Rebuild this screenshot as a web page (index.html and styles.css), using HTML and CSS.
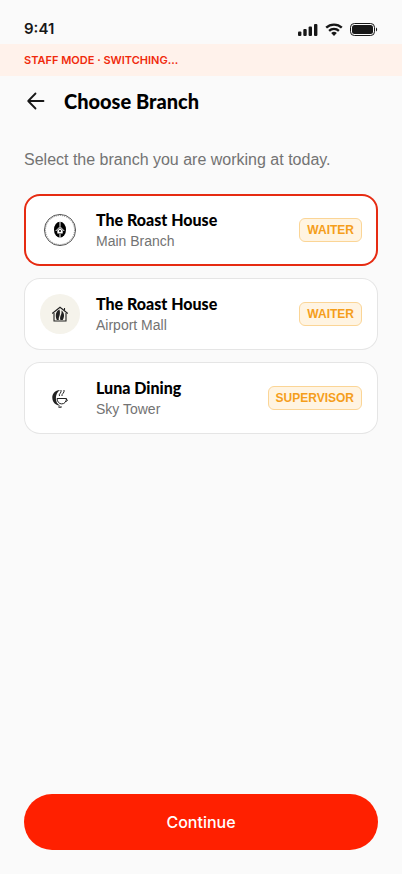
FILE: index.html
```
<!DOCTYPE html>
<html lang="en">
<head>
    <meta charset="UTF-8">
    <meta name="viewport" content="width=device-width, initial-scale=1.0">
    <title>Choose Branch</title>
    <link rel="stylesheet" href="styles.css">
</head>
<body>
    <div class="screen">
        <div class="status-bar">
            <span class="time">9:41</span>
            <div class="status-icons">
                <svg width="20" height="13" viewBox="0 0 20 13" fill="#171717" aria-hidden="true">
                    <rect x="0" y="8.5" width="3.4" height="4.5" rx="1"/>
                    <rect x="5.3" y="6" width="3.4" height="7" rx="1"/>
                    <rect x="10.6" y="3.5" width="3.4" height="9.5" rx="1"/>
                    <rect x="16" y="1" width="3.4" height="12" rx="1"/>
                </svg>
                <svg width="18" height="13" viewBox="0 0 18 13" aria-hidden="true">
                    <g fill="none" stroke="#171717" stroke-width="2.3">
                        <path d="M1.2 4.7a11.2 11.2 0 0 1 15.6 0"/>
                        <path d="M4.1 7.9a7 7 0 0 1 9.8 0"/>
                    </g>
                    <path d="M9 13 6.2 10.1a4 4 0 0 1 5.6 0z" fill="#171717"/>
                </svg>
                <svg width="28" height="13" viewBox="0 0 28 13" aria-hidden="true">
                    <rect x=".5" y=".5" width="24" height="12" rx="3.8" fill="none" stroke="#171717"/>
                    <rect x="2" y="2" width="21" height="9" rx="2.5" fill="#171717"/>
                    <path d="M26 4.5v4c1.5-.6 1.5-3.4 0-4z" fill="#171717"/>
                </svg>
            </div>
        </div>

        <div class="mode-banner">STAFF MODE · SWITCHING...</div>

        <header class="header">
            <button type="button" class="back-button" aria-label="Back">
                <svg width="24" height="24" viewBox="0 0 24 24" fill="none" stroke="#171717" stroke-width="1.8" stroke-linecap="round" stroke-linejoin="round">
                    <path d="M19.5 12H4.5M11.5 4.5 4.2 12l7.3 7.5"/>
                </svg>
            </button>
            <h1>Choose Branch</h1>
        </header>

        <form class="branch-form">
            <p class="intro" id="intro">Select the branch you are working at today.</p>

            <div class="branch-list" role="radiogroup" aria-labelledby="intro">
                <label class="branch-card">
                    <input type="radio" name="branch" value="main" checked>
                    <svg class="branch-logo" width="40" height="40" viewBox="0 0 40 40" aria-hidden="true">
                        <circle cx="20" cy="20" r="15.6" fill="none" stroke="#333" stroke-width=".8"/>
                        <circle cx="20" cy="20" r="14.5" fill="none" stroke="#666" stroke-width=".8" stroke-dasharray="1 1"/>
                        <ellipse cx="20" cy="19.7" rx="6" ry="8" fill="#000"/>
                        <path d="M20 11.5v5M15.7 21 20 16.7l4.3 4.3M20 24v4" fill="none" stroke="#fff" stroke-width="1"/>
                        <path d="M17.3 20.5 20 17.9l2.7 2.6v3h-5.4z" fill="#fff"/>
                        <path d="M19.3 20h1.4v2h-1.4z" fill="#000"/>
                    </svg>
                    <span class="branch-info">
                        <span class="branch-name">The Roast House</span>
                        <span class="branch-place">Main Branch</span>
                    </span>
                    <span class="role">WAITER</span>
                </label>

                <label class="branch-card">
                    <input type="radio" name="branch" value="airport">
                    <svg class="branch-logo" width="40" height="40" viewBox="0 0 40 40" aria-hidden="true">
                        <circle cx="20" cy="20" r="20" fill="#f5f3eb"/>
                        <g fill="none" stroke="#222" stroke-width="1.1">
                            <path d="m12.2 19.5 7.8-6.3 7.8 6.3"/>
                            <path d="M14 19v8h12v-8M24.5 16.5V14"/>
                        </g>
                        <path d="M19.5 15.5c-3.5 1.5-4.7 5.5-2.7 10.5h2c-.5-3 2.2-5 .7-10.5z" fill="#222"/>
                        <path d="M21.4 16.5c1 4-2.3 5.5-1 9.5h2.3c2.2-3.5 1.7-7.5-1.3-9.5z" fill="#222"/>
                    </svg>
                    <span class="branch-info">
                        <span class="branch-name">The Roast House</span>
                        <span class="branch-place">Airport Mall</span>
                    </span>
                    <span class="role">WAITER</span>
                </label>

                <label class="branch-card">
                    <input type="radio" name="branch" value="luna">
                    <svg class="branch-logo" width="40" height="40" viewBox="0 0 40 40" aria-hidden="true">
                        <path d="M20 12c-5 .2-7.9 4-7.7 7.8.2 4.6 3.5 7.8 8 8-3.2-1.6-4.4-4.2-4.4-7.5 0-3.2 1.1-6.2 4.1-8.3z" fill="#222"/>
                        <g fill="none" stroke="#222" stroke-width="1">
                            <path d="M17 20.5h9.5c-.3 3.4-2 5.4-4.8 5.4-2.6 0-4.4-2-4.7-5.4zM26 21.5c2-.5 2 2-.8 2"/>
                            <path d="M19.5 18c-1.4-2 2.5-3 1.5-6M22 18c-1-2 3-3 2-6"/>
                        </g>
                        <path d="M18 28.5h4l-.7 1.3h-2.6z" fill="#222"/>
                    </svg>
                    <span class="branch-info">
                        <span class="branch-name">Luna Dining</span>
                        <span class="branch-place">Sky Tower</span>
                    </span>
                    <span class="role">SUPERVISOR</span>
                </label>
            </div>

            <button type="submit" class="continue-button">Continue</button>
        </form>
    </div>
</body>
</html>
```
FILE: styles.css
```
* {
    box-sizing: border-box;
}

body {
    margin: 0;
    font-family: "Liberation Sans", Arial, sans-serif;
    background-color: #fafafa;
    color: #000;
}

button {
    border: none;
    padding: 0;
    cursor: pointer;
}

.screen {
    display: flex;
    flex-direction: column;
    min-height: 100vh;
}

.status-bar {
    display: flex;
    align-items: flex-end;
    justify-content: space-between;
    height: 44px;
    padding: 0 24px 4px;
}

.time {
    font-family: Inter, sans-serif;
    font-size: 15px;
    font-weight: 600;
    line-height: 22px;
    color: #171717;
}

.status-icons {
    display: flex;
    align-items: center;
    gap: 7px;
    height: 22px;
}

.mode-banner {
    padding: 8px 24px;
    background-color: #fff2eb;
    color: #f02a0c;
    font-family: Inter, sans-serif;
    font-size: 11px;
    font-weight: 600;
    line-height: 16px;
}

.header {
    display: flex;
    align-items: center;
    gap: 16px;
    padding: 13px 24px;
}

.back-button {
    display: flex;
    background: none;
}

h1 {
    margin: 0;
    font-family: Lato, sans-serif;
    font-size: 20px;
    font-weight: 900;
    line-height: 24px;
}

.branch-form {
    display: flex;
    flex: 1;
    flex-direction: column;
    padding: 22px 24px 24px;
}

.intro {
    margin: 0 0 22px;
    color: #737373;
    font-size: 16px;
    line-height: 24px;
}

.branch-list {
    display: grid;
    gap: 12px;
}

.branch-card {
    display: flex;
    align-items: center;
    min-height: 72px;
    padding: 8px 16px;
    background-color: #fff;
    border-radius: 16px;
    box-shadow: inset 0 0 0 1px #e5e5e5;
    cursor: pointer;
}

.branch-card:has(input:checked) {
    box-shadow: inset 0 0 0 2px #e62b12;
}

.branch-card input {
    appearance: none;
    width: 0;
    height: 0;
    margin: 0;
}

.branch-logo {
    flex: none;
}

.branch-info {
    display: flex;
    flex: 1;
    flex-direction: column;
    gap: 1px;
    margin-left: 16px;
}

.branch-name {
    font-family: Lato, sans-serif;
    font-size: 16px;
    font-weight: 900;
    line-height: 20px;
}

.branch-place {
    color: #737373;
    font-size: 14px;
    line-height: 20px;
}

.role {
    padding: 3px 7px;
    background-color: #fff4e2;
    border: 1px solid #fbd596;
    border-radius: 6px;
    color: #f59e1b;
    font-size: 12px;
    font-weight: 700;
    line-height: 16px;
}

.continue-button {
    width: 100%;
    height: 56px;
    margin-top: auto;
    background-color: #ff2000;
    border-radius: 28px;
    color: #fff;
    font-family: Inter, sans-serif;
    font-size: 16px;
    font-weight: 500;
}
```
